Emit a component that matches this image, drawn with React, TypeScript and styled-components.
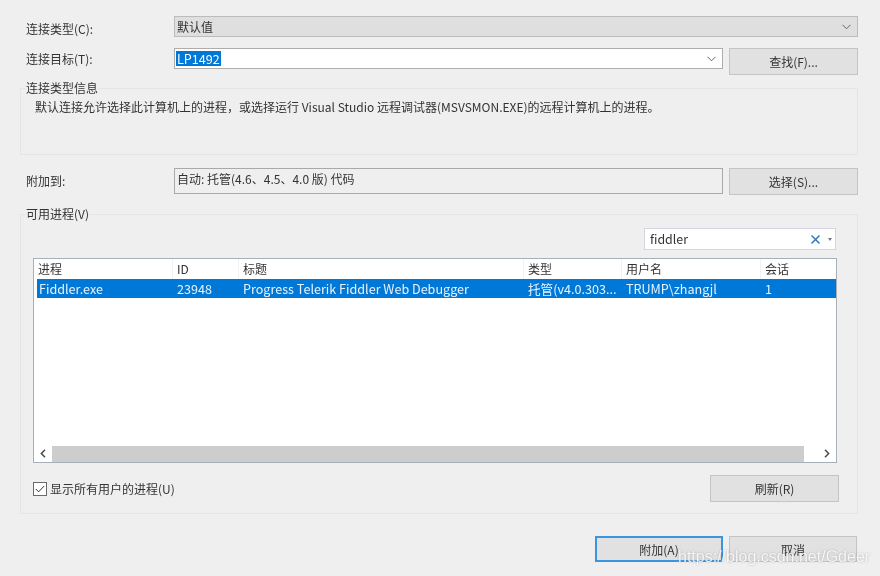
import styled, { createGlobalStyle } from 'styled-components';

const GlobalStyle = createGlobalStyle`
  html, body {
    margin: 0;
    padding: 0;
    background: #efefef;
  }
  body {
    font-family: "Noto Sans CJK SC", "Noto Sans", sans-serif;
    font-size: 12px;
    color: #333;
  }
`;

const Dialog = styled.div`
  position: relative;
  width: 880px;
  height: 576px;
  box-sizing: border-box;
  padding: 16px 22px 0 20px;
  background: #efefef;
  overflow: hidden;
  filter: blur(0.3px);
`;

const FormRow = styled.div<{ $top?: number }>`
  display: flex;
  align-items: flex-start;
  gap: 6px;
  margin-top: ${props => props.$top || 0}px;
`;

const Label = styled.label<{ $pad?: number }>`
  width: 142px;
  margin-left: 6px;
  flex-shrink: 0;
  line-height: 21px;
  padding-top: ${props => props.$pad ?? 2}px;
`;

const Combo = styled.div<{ $disabled?: boolean; $width: number }>`
  width: ${props => props.$width}px;
  height: 21px;
  box-sizing: border-box;
  display: flex;
  align-items: center;
  justify-content: space-between;
  padding: 0 6px 0 2px;
  border: 1px solid ${props => (props.$disabled ? '#bcbcbc' : '#adadad')};
  background: ${props => (props.$disabled ? '#dfdfdf' : '#fff')};
`;

const Selected = styled.span`
  margin-left: -1px;
  background: #0078d7;
  color: #fff;
  font-size: 12.6px;
  line-height: 15px;
  padding: 0 1px;
`;

const Button = styled.button<{ $width?: number; $height?: number; $primary?: boolean }>`
  width: ${props => props.$width || 129}px;
  height: ${props => props.$height || 27}px;
  flex-shrink: 0;
  padding: 0;
  font: inherit;
  color: #333;
  background: #e1e1e1;
  border: ${props => (props.$primary ? '2px solid #3a95e0' : '1px solid #c4c4c4')};
`;

const Group = styled.section<{ $height: number; $top: number }>`
  position: relative;
  height: ${props => props.$height}px;
  margin-top: ${props => props.$top}px;
  box-sizing: border-box;
  border: 1px solid #e5e5e5;
`;

const Legend = styled.span`
  position: absolute;
  left: 5px;
  top: -10px;
  line-height: 18px;
  background: #efefef;
`;

const InfoText = styled.p`
  margin: 9px 0 0 14px;
  line-height: 18px;
  white-space: nowrap;
`;

const ReadOnly = styled.div`
  width: 550px;
  height: 26px;
  box-sizing: border-box;
  border: 1px solid #a9a9a9;
  padding: 0 2px;
  line-height: 19px;
`;

const ProcessBody = styled.div`
  display: flex;
  flex-direction: column;
  padding: 13px 21px 0 12px;
`;

const SearchBox = styled.div`
  align-self: flex-end;
  width: 192px;
  height: 22px;
  box-sizing: border-box;
  display: flex;
  align-items: center;
  padding: 0 3px 0 5px;
  background: #fff;
  border: 1px solid #d3d6e2;
`;

const SearchText = styled.span`
  flex: 1;
  font-size: 12.4px;
`;

const List = styled.div`
  width: 804px;
  height: 205px;
  margin-top: 8px;
  box-sizing: border-box;
  display: flex;
  flex-direction: column;
  background: #fff;
  border: 1px solid #a9afb8;
`;

const HeaderRow = styled.div`
  display: grid;
  grid-template-columns: 139px 66px 285px 98px 139px 75px;
  height: 20px;
  line-height: 20px;
`;

const HeaderCell = styled.div`
  padding-left: 4px;
  border-right: 1px solid #f2f2f2;
  &:last-child {
    border-right: 0;
  }
`;

const ItemRow = styled.div`
  display: grid;
  grid-template-columns: 138px 66px 285px 98px 139px 72px;
  height: 19px;
  margin-left: 3px;
  font-size: 12.6px;
  line-height: 19px;
  background: #0078d7;
  color: #e8f2fb;
`;

const ItemCell = styled.div`
  padding-left: 2px;
  white-space: nowrap;
  overflow: hidden;
`;

const Spacer = styled.div`
  flex: 1;
`;

const ScrollBar = styled.div`
  display: flex;
  height: 17px;
  align-items: center;
  justify-content: space-between;
  background: #fff;
`;

const ScrollStart = styled.div`
  display: flex;
  align-items: center;
`;

const ScrollThumb = styled.div`
  width: 752px;
  height: 16px;
  background: #cdcdcd;
`;

const ScrollButton = styled.div`
  width: 18px;
  height: 16px;
  display: flex;
  align-items: center;
  justify-content: center;
`;

const FooterRow = styled.div`
  display: flex;
  align-items: center;
  justify-content: space-between;
  width: 806px;
  margin-top: 12px;
`;

const CheckLine = styled.div`
  display: flex;
  align-items: center;
  gap: 3px;
`;

const CheckBox = styled.span`
  width: 14px;
  height: 14px;
  box-sizing: border-box;
  display: flex;
  align-items: center;
  justify-content: center;
  background: #fff;
  border: 1px solid #6a6a6a;
`;

const Actions = styled.div`
  display: flex;
  justify-content: flex-end;
  gap: 6px;
  margin-top: 22px;
  margin-right: 1px;
`;

const Watermark = styled.div`
  position: absolute;
  left: 678px;
  top: 547px;
  font-family: "Liberation Sans", sans-serif;
  font-size: 16px;
  line-height: 20px;
  color: rgba(255, 255, 255, 0.85);
  text-shadow: 0 0 2px rgba(90, 90, 90, 0.45);
  white-space: nowrap;
`;

const Caret = styled.span`
  width: 0;
  height: 0;
  margin-left: 8px;
  border-left: 2.5px solid transparent;
  border-right: 2.5px solid transparent;
  border-top: 3px solid #777;
`;

const Chevron = () => (
  <svg width="9" height="6" viewBox="0 0 9 6" fill="none">
    <path d="M0.5 0.8 L4.5 4.8 L8.5 0.8" stroke="#666" strokeWidth="1" />
  </svg>
);

const ClearIcon = () => (
  <svg width="9" height="9" viewBox="0 0 9 9" fill="none">
    <path d="M0.5 0.5 L8.5 8.5 M8.5 0.5 L0.5 8.5" stroke="#2a7cc4" strokeWidth="1.5" />
  </svg>
);

const ArrowLeft = () => (
  <svg width="6" height="9" viewBox="0 0 6 9" fill="none">
    <path d="M5 0.8 L1.4 4.5 L5 8.2" stroke="#505050" strokeWidth="1.6" />
  </svg>
);

const ArrowRight = () => (
  <svg width="6" height="9" viewBox="0 0 6 9" fill="none">
    <path d="M1 0.8 L4.6 4.5 L1 8.2" stroke="#505050" strokeWidth="1.6" />
  </svg>
);

const Tick = () => (
  <svg width="10" height="8" viewBox="0 0 10 8" fill="none">
    <path d="M0.8 4 L3.6 6.8 L9.2 1" stroke="#333" strokeWidth="1" />
  </svg>
);

const columns = ['进程', 'ID', '标题', '类型', '用户名', '会话'];
const row = ['Fiddler.exe', '23948', 'Progress Telerik Fiddler Web Debugger', '托管(v4.0.303...', 'TRUMP\\zhangjl', '1'];

const App = () => {
  return (
    <Dialog>
      <GlobalStyle />
      <FormRow>
        <Label>连接类型(C):</Label>
        <Combo $disabled $width={684}>
          默认值
          <Chevron />
        </Combo>
      </FormRow>
      <FormRow $top={9}>
        <Label $pad={0}>连接目标(T):</Label>
        <Combo $width={550}>
          <Selected>LP1492</Selected>
          <Chevron />
        </Combo>
        <Button>查找(F)...</Button>
      </FormRow>

      <Group $top={13} $height={67}>
        <Legend>连接类型信息</Legend>
        <InfoText>默认连接允许选择此计算机上的进程，或选择运行 Visual Studio 远程调试器(MSVSMON.EXE)的远程计算机上的进程。</InfoText>
      </Group>

      <FormRow $top={13}>
        <Label>附加到:</Label>
        <ReadOnly>自动: 托管(4.6、4.5、4.0 版) 代码</ReadOnly>
        <Button>选择(S)...</Button>
      </FormRow>

      <Group $top={19} $height={300}>
        <Legend>可用进程(V)</Legend>
        <ProcessBody>
          <SearchBox>
            <SearchText>fiddler</SearchText>
            <ClearIcon />
            <Caret />
          </SearchBox>
          <List>
            <HeaderRow>
              {columns.map(name => (
                <HeaderCell key={name}>{name}</HeaderCell>
              ))}
            </HeaderRow>
            <ItemRow>
              {row.map(value => (
                <ItemCell key={value}>{value}</ItemCell>
              ))}
            </ItemRow>
            <Spacer />
            <ScrollBar>
              <ScrollStart>
                <ScrollButton><ArrowLeft /></ScrollButton>
                <ScrollThumb />
              </ScrollStart>
              <ScrollButton><ArrowRight /></ScrollButton>
            </ScrollBar>
          </List>
          <FooterRow>
            <CheckLine>
              <CheckBox><Tick /></CheckBox>
              显示所有用户的进程(U)
            </CheckLine>
            <Button>刷新(R)</Button>
          </FooterRow>
        </ProcessBody>
      </Group>

      <Actions>
        <Button $primary $width={128} $height={26}>附加(A)</Button>
        <Button $width={128} $height={26}>取消</Button>
      </Actions>
      <Watermark>https://blog.csdn.net/Gdeer</Watermark>
    </Dialog>
  );
};

export default App;
